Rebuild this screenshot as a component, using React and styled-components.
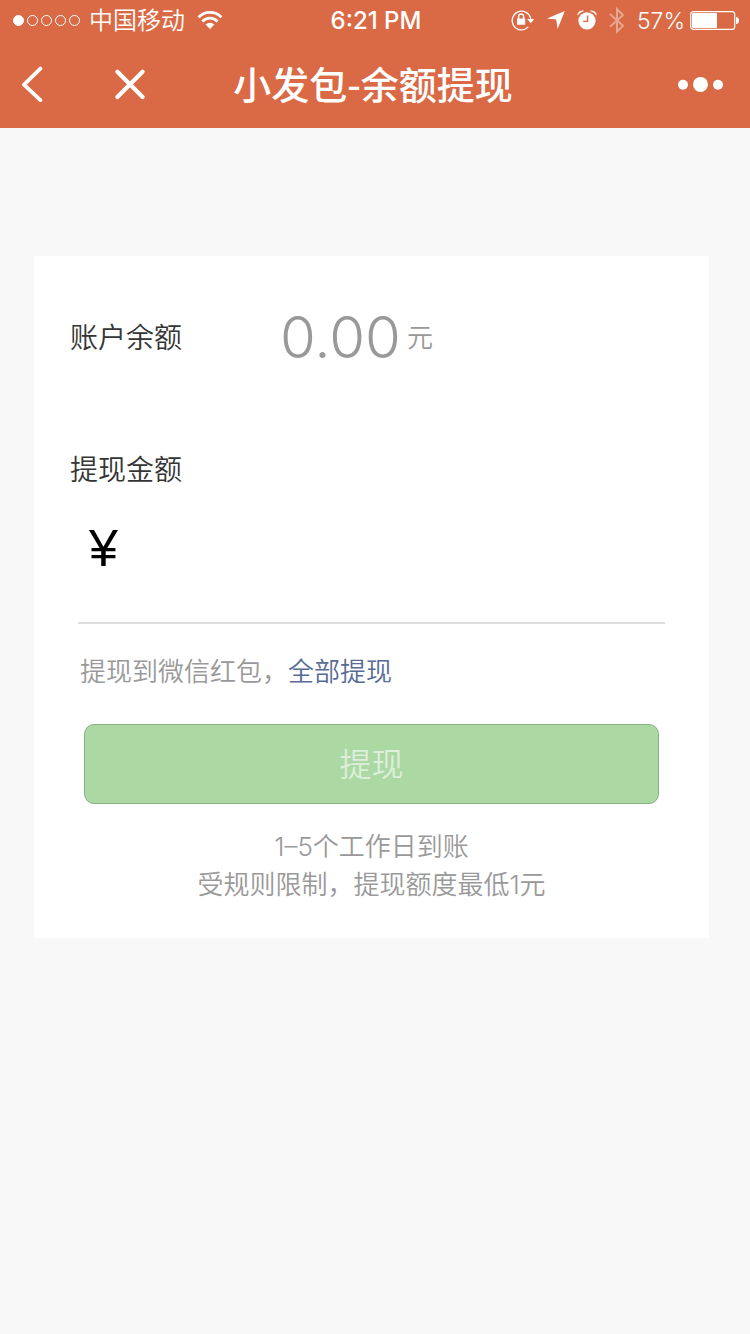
import React, { useState } from "react";
import styled, { createGlobalStyle } from "styled-components";

const GlobalStyle = createGlobalStyle`
  * {
    box-sizing: border-box;
  }
  body {
    margin: 0;
    background-color: #f8f8f8;
    font-family: Inter, "Noto Sans CJK SC", sans-serif;
    font-weight: 350;
  }
`;

const WifiIcon = () => (
  <svg width="26" height="20" viewBox="0 0 26 20" aria-hidden="true">
    <g fill="none" stroke="#ffffff" strokeWidth="2.8">
      <path d="M1.6 7.2A16 16 0 0 1 24.4 7.2" />
      <path d="M5.4 11.4A10.6 10.6 0 0 1 20.6 11.4" />
    </g>
    <path d="M13 19L8.6 14.6a6.2 6.2 0 0 1 8.8 0Z" fill="#ffffff" />
  </svg>
);

const RotationLockIcon = () => (
  <svg width="24" height="22" viewBox="0 0 24 22" aria-hidden="true">
    <path
      d="M17.3 17.9A9.3 9.3 0 1 1 19.7 10"
      fill="none"
      stroke="#ffffff"
      strokeWidth="1.3"
    />
    <path d="M16.2 10H23.2L19.7 14.2Z" fill="#ffffff" />
    <rect x="6" y="9.6" width="8.2" height="6.2" rx="0.6" fill="#ffffff" />
    <path
      d="M7.6 10V7.4a2.5 2.5 0 0 1 5 0V10"
      fill="none"
      stroke="#ffffff"
      strokeWidth="1.5"
    />
  </svg>
);

const LocationIcon = () => (
  <svg width="18" height="20" viewBox="0 0 18 20" aria-hidden="true">
    <path d="M17.8 1L0 8.6L9.2 9.6L10.6 19Z" fill="#ffffff" />
  </svg>
);

const AlarmIcon = () => (
  <svg width="20" height="20" viewBox="0 0 20 20" aria-hidden="true">
    <circle cx="10" cy="10.8" r="8.6" fill="#ffffff" />
    <path
      d="M0.6 5.2Q1 0.6 6.6 0.8Q2.8 2 0.6 5.2ZM19.4 5.2Q19 0.6 13.4 0.8Q17.2 2 19.4 5.2Z"
      fill="#ffffff"
      stroke="#ffffff"
      strokeWidth="0.5"
    />
    <path
      d="M10.6 5.6V11.4H6.2"
      fill="none"
      stroke="#d96a45"
      strokeWidth="1.4"
    />
  </svg>
);

const BluetoothIcon = () => (
  <svg width="16" height="27" viewBox="0 0 16 27" aria-hidden="true">
    <path
      d="M1 7L14 18.8L8 24.6V2.2L14 8L1 19.8"
      fill="none"
      stroke="#ffffff"
      strokeOpacity="0.4"
      strokeWidth="2"
    />
  </svg>
);

const BatteryIcon = () => (
  <svg width="49" height="20" viewBox="0 0 49 20" aria-hidden="true">
    <rect
      x="0.7"
      y="1.7"
      width="44"
      height="17.6"
      rx="2.6"
      fill="none"
      stroke="#ffffff"
      strokeWidth="1.2"
    />
    <rect x="2" y="3" width="25" height="15" rx="1" fill="#ffffff" />
    <path d="M46 7Q49 7.4 49 10.5T46 14Z" fill="#ffffff" />
  </svg>
);

const BackIcon = () => (
  <svg width="24" height="36" viewBox="0 0 24 36" aria-hidden="true">
    <path
      d="M20.4 2.6L4 18.6L20.4 34.2"
      fill="none"
      stroke="#ffffff"
      strokeWidth="3.8"
      strokeLinecap="round"
      strokeLinejoin="round"
    />
  </svg>
);

const CloseIcon = () => (
  <svg width="32" height="32" viewBox="0 0 32 32" aria-hidden="true">
    <path
      d="M3.4 3.8L28.6 29M28.6 3.8L3.4 29"
      fill="none"
      stroke="#ffffff"
      strokeWidth="4.2"
      strokeLinecap="round"
    />
  </svg>
);

const MoreIcon = () => (
  <svg width="48" height="16" viewBox="0 0 48 16" aria-hidden="true">
    <g fill="#ffffff">
      <circle cx="5" cy="8.8" r="5" />
      <circle cx="22.5" cy="8.4" r="7.5" />
      <circle cx="40" cy="8.8" r="5" />
    </g>
  </svg>
);

export const StatusBar = () => (
  <Status>
    <StatusGroup>
      <Signal>
        {[true, false, false, false, false].map((filled, i) => (
          <SignalDot key={i} $filled={filled} />
        ))}
      </Signal>
      <Carrier>中国移动</Carrier>
      <WifiIcon />
    </StatusGroup>
    <Time>6:21 PM</Time>
    <StatusIcons>
      <RotationLockIcon />
      <LocationIcon />
      <AlarmIcon />
      <BluetoothIcon />
      <Battery>
        <Percent>57%</Percent>
        <BatteryIcon />
      </Battery>
    </StatusIcons>
  </Status>
);

export const App = () => {
  const [amount, setAmount] = useState("");

  return (
    <>
      <GlobalStyle />
      <Header>
        <StatusBar />
        <NavBar>
          <NavGroup>
            <NavButton type="button" aria-label="返回">
              <BackIcon />
            </NavButton>
            <NavButton type="button" aria-label="关闭">
              <CloseIcon />
            </NavButton>
          </NavGroup>
          <Title>小发包-余额提现</Title>
          <NavGroup $end>
            <NavButton type="button" aria-label="更多">
              <MoreIcon />
            </NavButton>
          </NavGroup>
        </NavBar>
      </Header>
      <Card>
        <BalanceRow>
          <Label as="span">账户余额</Label>
          <Balance>
            <BalanceValue>0.00</BalanceValue>
            <Unit>元</Unit>
          </Balance>
        </BalanceRow>
        <AmountLabel htmlFor="amount">提现金额</AmountLabel>
        <Form onSubmit={(e) => e.preventDefault()}>
          <AmountRow>
            <Currency>¥</Currency>
            <AmountInput
              id="amount"
              inputMode="decimal"
              value={amount}
              onChange={(e) => setAmount(e.target.value)}
            />
          </AmountRow>
          <Hint>
            提现到微信红包，<AllLink href="#all">全部提现</AllLink>
          </Hint>
          <Submit type="submit" disabled={!amount}>
            提现
          </Submit>
          <Notes>
            1–5个工作日到账
            <br />
            受规则限制，提现额度最低1元
          </Notes>
        </Form>
      </Card>
    </>
  );
};

const Header = styled.header`
  color: #ffffff;
  background-color: #d96a45;
`;
const Status = styled.div`
  height: 40px;
  display: grid;
  grid-template-columns: 1fr auto 1fr;
  align-items: center;
  padding: 0px 11px 0px 13px;
  font-size: 24px;
  line-height: 36px;
`;
const StatusGroup = styled.div`
  display: flex;
  align-items: center;
`;
const Signal = styled.div`
  display: flex;
  gap: 3px;
  margin-right: 9px;
`;
const SignalDot = styled.span`
  width: 11px;
  height: 11px;
  border: 1px solid #ffffff;
  border-radius: 50%;
  background-color: ${(p) => (p.$filled ? "#ffffff" : "transparent")};
`;
const Carrier = styled.span`
  margin-right: 12px;
  padding-top: 2px;
`;
const Time = styled.span`
  padding-top: 2px;
  font-weight: 500;
`;
const StatusIcons = styled.div`
  display: flex;
  align-items: center;
  justify-content: flex-end;
  gap: 12px;
`;
const Battery = styled.div`
  display: flex;
  align-items: center;
  gap: 5px;
`;
const Percent = styled.span`
  padding-top: 2px;
  font-size: 23px;
`;
const NavBar = styled.nav`
  height: 88px;
  display: grid;
  grid-template-columns: 1fr auto 1fr;
  align-items: center;
  padding: 0px 24px 0px 20px;
`;
const NavGroup = styled.div`
  display: flex;
  align-items: center;
  gap: 70px;
  justify-content: ${(p) => (p.$end ? "flex-end" : "flex-start")};
`;
const NavButton = styled.button`
  display: flex;
  padding: 0px;
  border: none;
  background: none;
`;
const Title = styled.h1`
  margin: 0px;
  padding-bottom: 2px;
  font-family: "Noto Sans CJK SC", sans-serif;
  font-size: 38px;
  font-weight: 500;
  line-height: 56px;
`;
const Card = styled.main`
  margin: 128px 41px 0px 34px;
  padding: 36px 0px 34px;
  background-color: #ffffff;
`;
const BalanceRow = styled.div`
  height: 90px;
  display: flex;
  align-items: center;
  gap: 98px;
  padding-left: 36px;
`;
const Label = styled.label`
  padding-top: 2px;
  color: #353535;
  font-size: 28px;
  line-height: 40px;
`;
const AmountLabel = styled(Label)`
  display: block;
  margin-top: 66px;
  padding-left: 36px;
`;
const Balance = styled.div`
  display: flex;
  align-items: center;
  gap: 6px;
  color: #999999;
  line-height: 90px;
`;
const BalanceValue = styled.span`
  font-size: 58px;
`;
const Unit = styled.span`
  padding-top: 2px;
  font-size: 26px;
`;
const Form = styled.form`
  margin: 0px 44px;
`;
const AmountRow = styled.div`
  display: flex;
  align-items: center;
  gap: 16px;
  padding: 0px 0px 16px 11px;
  border-bottom: 2px solid #dddddd;
`;
const Currency = styled.span`
  color: #000000;
  font-family: "Liberation Sans", sans-serif;
  font-size: 52px;
`;
const AmountInput = styled.input`
  flex: 1;
  min-width: 0px;
  height: 116px;
  padding: 0px;
  border: none;
  outline: none;
  background: none;
  font-family: inherit;
  font-size: 52px;
`;
const Hint = styled.p`
  margin: 29px 0px 33px;
  padding-left: 2px;
  color: #999999;
  font-size: 26px;
  line-height: 38px;
`;
const AllLink = styled.a`
  color: #576b95;
  text-decoration: none;
`;
const Submit = styled.button`
  width: calc(100% - 12px);
  height: 80px;
  display: block;
  margin: 0px 6px;
  padding: 0px 0px 4px;
  border: 1px solid #88b183;
  border-radius: 10px;
  color: #ddefda;
  background-color: #abd8a3;
  font-family: inherit;
  font-size: 32px;
  font-weight: inherit;
`;
const Notes = styled.p`
  margin: 24px 0px 0px;
  color: #999999;
  font-size: 26px;
  line-height: 38px;
  text-align: center;
`;
export default App;
